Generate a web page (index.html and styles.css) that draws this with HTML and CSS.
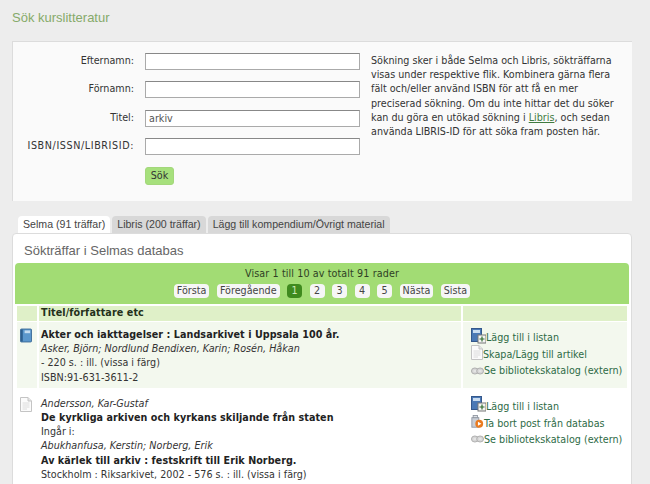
FILE: index.html
```html
<!DOCTYPE html>
<html lang="sv">
<head>
  <meta charset="UTF-8" />
  <title>Sök kurslitteratur</title>
  <link rel="stylesheet" href="styles.css">
</head>
<body>

<svg class="defs" width="0" height="0">
  <symbol id="book" viewBox="0 0 13 15">
    <rect x="0.5" y="0.5" width="12" height="14" rx="1" fill="#5b97cc" stroke="#3b6a98"/>
    <rect x="1" y="1" width="2" height="13" fill="#2d5f8f"/>
    <rect x="5" y="2" width="6" height="3" fill="#c4dcf0"/>
  </symbol>
  <symbol id="doc" viewBox="0 0 12 15">
    <path d="M0.5 0.5H8L11.5 4V14.5H0.5Z" fill="#fbfbfb" stroke="#c4c4c4"/>
    <path d="M8 0.5V4H11.5" fill="#e6e6e6" stroke="#c4c4c4"/>
    <path d="M2.5 6H9.5M2.5 8H9.5M2.5 10H9.5M2.5 12H7" stroke="#dcdcdc"/>
  </symbol>
  <symbol id="add" viewBox="0 0 15 16">
    <rect x="0.5" y="0.5" width="10" height="13" fill="#4a78b5" stroke="#34588c"/>
    <rect x="2" y="2" width="7" height="3" fill="#c9dcf0"/>
    <rect x="7" y="7" width="8" height="8" fill="#f4f4f4" stroke="#777"/>
    <path d="M11 8.5V13.5M8.5 11H13.5" stroke="#2d6b2d" stroke-width="1.2"/>
  </symbol>
  <symbol id="link" viewBox="0 0 15 9">
    <ellipse cx="4.5" cy="4.5" rx="4" ry="3.5" fill="#d6d6d6" stroke="#a8a8a8"/>
    <ellipse cx="10.5" cy="4.5" rx="4" ry="3.5" fill="#d6d6d6" stroke="#a8a8a8"/>
    <path d="M3 4.5H6M9 4.5H12" stroke="#f2f2f2" stroke-width="1.4"/>
  </symbol>
  <symbol id="trash" viewBox="0 0 15 16">
    <rect x="1" y="3" width="8" height="11" fill="#c9ced6" stroke="#8d949f"/>
    <rect x="2.5" y="0.5" width="5" height="2.5" fill="#dfe2e6" stroke="#8d949f"/>
    <circle cx="9.5" cy="10" r="4.5" fill="#ea7a1e"/>
    <path d="M8 7.8L12 10L8 12.2Z" fill="#fff"/>
  </symbol>
</svg>

<h1 class="page-title">Sök kurslitteratur</h1>

<form class="search-box">
  <div class="fields">
    <label for="f1">Efternamn:</label><input id="f1" type="text">
    <label for="f2">Förnamn:</label><input id="f2" type="text">
    <label for="f3">Titel:</label><input id="f3" type="text" value="arkiv">
    <label for="f4" class="caps">ISBN/ISSN/LIBRISID:</label><input id="f4" type="text">
    <span></span><div><button type="button" class="search-btn">Sök</button></div>
  </div>
  <p class="help">Sökning sker i både Selma och Libris, sökträffarna visas under respektive flik. Kombinera gärna flera fält och/eller använd ISBN för att få en mer preciserad sökning. Om du inte hittar det du söker kan du göra en utökad sökning i <a href="#">Libris</a>, och sedan använda LIBRIS-ID för att söka fram posten här.</p>
</form>

<div class="tabs">
  <a class="tab active" href="#">Selma (91 träffar)</a>
  <a class="tab" href="#">Libris (200 träffar)</a>
  <a class="tab" href="#">Lägg till kompendium/Övrigt material</a>
</div>

<div class="results">
  <h2>Sökträffar i Selmas databas</h2>

  <div class="pager">
    <div class="pager-info">Visar 1 till 10 av totalt 91 rader</div>
    <div class="pages">
      <a href="#">Första</a>
      <a href="#">Föregående</a>
      <a href="#" class="current">1</a>
      <a href="#">2</a>
      <a href="#">3</a>
      <a href="#">4</a>
      <a href="#">5</a>
      <a href="#">Nästa</a>
      <a href="#">Sista</a>
    </div>
  </div>

  <table class="hits">
    <colgroup><col class="c-icon"><col class="c-title"><col class="c-actions"></colgroup>
    <thead>
      <tr><th></th><th>Titel/författare etc</th><th></th></tr>
    </thead>
    <tbody>
      <tr class="odd">
        <td class="type"><svg width="12" height="15"><use href="#book"/></svg></td>
        <td>
          <b>Akter och iakttagelser : Landsarkivet i Uppsala 100 år.</b><br>
          <i>Asker, Björn; Nordlund Bendixen, Karin; Rosén, Håkan</i><br>
          - 220 s. : ill. (vissa i färg)<br>
          ISBN:91-631-3611-2
        </td>
        <td class="actions">
          <a href="#"><svg class="ic-add" width="15" height="16"><use href="#add"/></svg>Lägg till i listan</a>
          <a href="#"><svg class="ic-doc" width="12" height="15"><use href="#doc"/></svg>Skapa/Lägg till artikel</a>
          <a href="#"><svg class="ic-link" width="13" height="8"><use href="#link"/></svg>Se bibliotekskatalog (extern)</a>
        </td>
      </tr>
      <tr class="even">
        <td class="type"><svg width="12" height="15"><use href="#doc"/></svg></td>
        <td>
          <i>Andersson, Kar-Gustaf</i><br>
          <b>De kyrkliga arkiven och kyrkans skiljande från staten</b><br>
          Ingår i:<br>
          <i>Abukhanfusa, Kerstin; Norberg, Erik</i><br>
          <b>Av kärlek till arkiv : festskrift till Erik Norberg.</b><br>
          Stockholm : Riksarkivet, 2002 - 576 s. : ill. (vissa i färg)
        </td>
        <td class="actions">
          <a href="#"><svg class="ic-add" width="15" height="16"><use href="#add"/></svg>Lägg till i listan</a>
          <a href="#"><svg class="ic-trash" width="13" height="14"><use href="#trash"/></svg>Ta bort post från databas</a>
          <a href="#"><svg class="ic-link" width="13" height="8"><use href="#link"/></svg>Se bibliotekskatalog (extern)</a>
        </td>
      </tr>
    </tbody>
  </table>
</div>

</body>
</html>
```

FILE: styles.css
```css
html {
  overflow: hidden;
}
body {
  margin: 0;
  padding: 0 18px 0 12px;
  height: 484px;
  overflow: hidden;
  box-sizing: border-box;
  background: #ededed;
  color: #333;
  font-family: "DejaVu Sans", Verdana, sans-serif;
  font-size: 9.6px;
  line-height: 14.2px;
}
.defs {
  position: absolute;
}
.page-title {
  margin: 0;
  padding-top: 10px;
  height: 41px;
  box-sizing: border-box;
  font-family: "Liberation Sans", Arial, sans-serif;
  font-size: 13px;
  line-height: 16px;
  font-weight: normal;
  color: #86aa6a;
}

/* Sökformulär */
.search-box {
  display: flex;
  height: 160px;
  box-sizing: border-box;
  background: #fafafa;
  border-top: 1px solid #dcdcdc;
  border-left: 1px solid #dcdcdc;
}
.fields {
  display: grid;
  grid-template-columns: 121px 215px;
  grid-auto-rows: 17px;
  column-gap: 11px;
  row-gap: 11.4px;
  padding-top: 11px;
}
.fields label {
  text-align: right;
  line-height: 16px;
  color: #333;
  white-space: nowrap;
}
.fields label.caps {
  letter-spacing: 0.6px;
}
.fields input {
  width: 100%;
  height: 17px;
  box-sizing: border-box;
  margin: 0;
  padding: 1px 3px;
  border: 1px solid #aaa;
  border-top-color: #888;
  background: #fff;
  color: #555;
  font: 9.6px "DejaVu Sans", Verdana, sans-serif;
}
.search-btn {
  display: block;
  width: 29px;
  height: 18px;
  padding: 0;
  border: 1px solid #a3d77b;
  border-radius: 3px;
  background: #a6e07c;
  color: #333;
  font: 9.6px "DejaVu Sans", Verdana, sans-serif;
}
.help {
  width: 250px;
  margin: 12px 0 0 11px;
}
.help a {
  color: #3f7a3f;
}

/* Flikar */
.tabs {
  display: flex;
  gap: 2px;
  margin: 15px 0 0 6px;
  height: 17px;
  font-family: "Liberation Sans", Arial, sans-serif;
  font-size: 10.6px;
  line-height: 17px;
}
.tab {
  padding: 0 5px;
  background: #d8d8d8;
  border-radius: 4px 4px 0 0;
  color: #444;
  text-decoration: none;
}
.tab.active {
  background: #fff;
}

/* Resultat */
.results {
  background: #fff;
  border: 1px solid #dcdcdc;
  border-radius: 4px 4px 0 0;
  padding: 0 2px;
  height: 260px;
  overflow: hidden;
}
.results h2 {
  margin: 0;
  padding: 9px 0 0 9px;
  height: 29px;
  box-sizing: border-box;
  font-family: "Liberation Sans", Arial, sans-serif;
  font-size: 13px;
  line-height: 16px;
  font-weight: normal;
  color: #666;
}
.pager {
  height: 41px;
  padding-top: 4px;
  box-sizing: border-box;
  background: #a2dc74;
  border-radius: 4px 4px 0 0;
  text-align: center;
  color: #2f3f25;
}
.pager-info {
  letter-spacing: 0.1px;
}
.pages {
  display: flex;
  justify-content: center;
  gap: 7.5px;
  margin-top: 3px;
}
.pages a {
  height: 14px;
  min-width: 9px;
  line-height: 14px;
  padding: 0 3px;
  background: #f6f6f6;
  border-radius: 4px;
  color: #444;
  text-decoration: none;
}
.pages a.current {
  background: #3f8a1e;
  color: #cfe8b8;
}
.hits {
  width: 100%;
  table-layout: fixed;
  border-collapse: separate;
  border-spacing: 2px 1px;
  margin-top: 1px;
}
.c-icon { width: 20px; }
.c-actions { width: 164px; }
.hits th {
  height: 15px;
  padding: 0 0 0 2px;
  background: #dff0c8;
  text-align: left;
  font-size: 9.6px;
  letter-spacing: 0.1px;
  color: #24301a;
}
.hits td {
  padding: 6px 0 3px 2px;
  vertical-align: top;
  color: #333;
}
.hits b {
  color: #222;
  letter-spacing: 0.06px;
}
.odd td {
  background: #f3f8ee;
}
.even td {
  padding-top: 8px;
}
.hits td.type {
  padding-left: 3px;
}
.hits td.actions {
  padding: 7px 0 0 8px;
}
.hits .even td.actions {
  padding-top: 9px;
}
.actions a {
  display: flex;
  align-items: flex-end;
  height: 16.5px;
  color: #2e6b46;
  text-decoration: none;
  white-space: nowrap;
}
.actions svg {
  flex: none;
  margin-bottom: 2px;
}
.actions .ic-link {
  margin-right: 0;
  margin-bottom: 4px;
}
```
